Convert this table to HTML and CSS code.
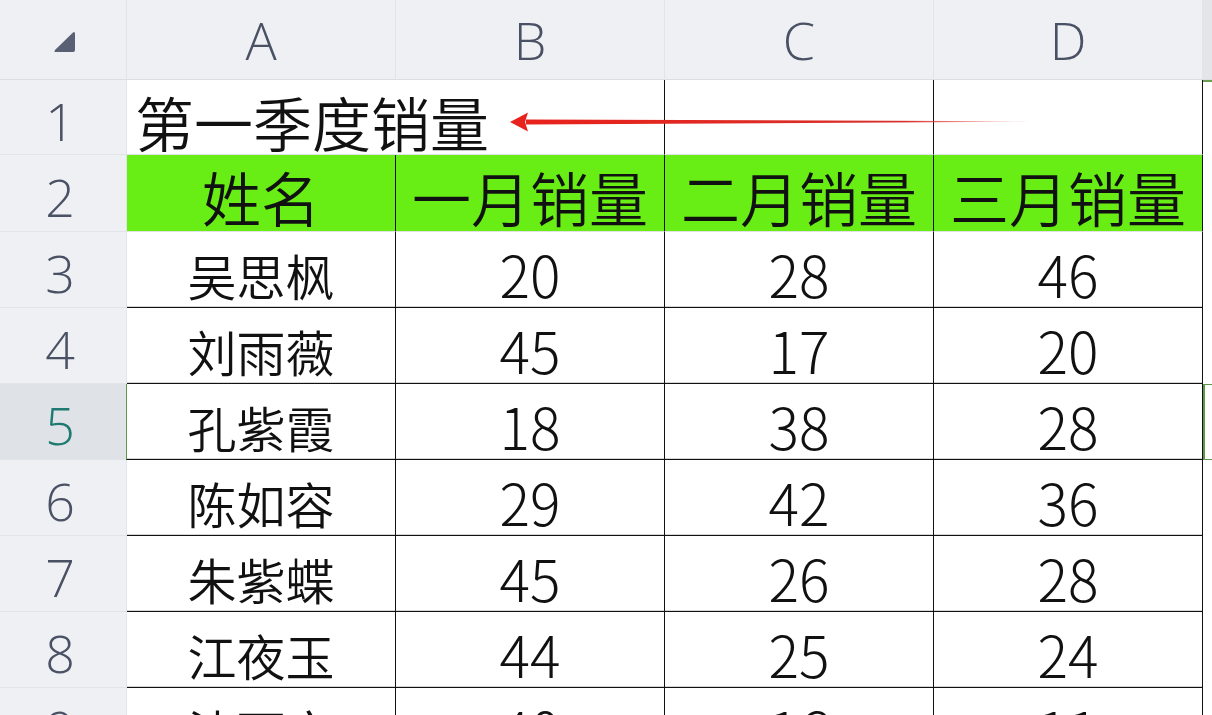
FILE: index.html
```html
<!DOCTYPE html>
<html lang="zh-CN">
<head>
<meta charset="utf-8">
<title>第一季度销量</title>
<link rel="stylesheet" href="styles.css">
</head>
<body>
<div class="sheet">
  <div class="corner">
    <svg width="24" height="24" viewBox="0 0 24 24"><path d="M21 2.5 Q23 1 23 4 L23 20 Q23 22 21 22 L4 22 Q1.5 22 3 20 Z" fill="#5a6073"/></svg>
  </div>
  <div class="colhead">A</div>
  <div class="colhead">B</div>
  <div class="colhead">C</div>
  <div class="colhead">D</div>
  <div class="colhead colhead-e"></div>

  <div class="rowhead r1">1</div>
  <div class="cell title">第一季度销量</div>
  <div class="cell title-b"></div>
  <div class="cell plain"></div>
  <div class="cell plain"></div>
  <div class="cell e e1"></div>

  <div class="rowhead r2">2</div>
  <div class="cell head">姓名</div>
  <div class="cell head">一月销量</div>
  <div class="cell head">二月销量</div>
  <div class="cell head">三月销量</div>
  <div class="cell e"></div>

  <div class="rowhead">3</div>
  <div class="cell name">吴思枫</div>
  <div class="cell num">20</div>
  <div class="cell num">28</div>
  <div class="cell num">46</div>
  <div class="cell e"></div>

  <div class="rowhead">4</div>
  <div class="cell name">刘雨薇</div>
  <div class="cell num">45</div>
  <div class="cell num">17</div>
  <div class="cell num">20</div>
  <div class="cell e"></div>

  <div class="rowhead sel">5</div>
  <div class="cell name sel-left">孔紫霞</div>
  <div class="cell num">18</div>
  <div class="cell num">38</div>
  <div class="cell num">28</div>
  <div class="cell e e-sel"></div>

  <div class="rowhead">6</div>
  <div class="cell name">陈如容</div>
  <div class="cell num">29</div>
  <div class="cell num">42</div>
  <div class="cell num">36</div>
  <div class="cell e"></div>

  <div class="rowhead">7</div>
  <div class="cell name">朱紫蝶</div>
  <div class="cell num">45</div>
  <div class="cell num">26</div>
  <div class="cell num">28</div>
  <div class="cell e"></div>

  <div class="rowhead">8</div>
  <div class="cell name">江夜玉</div>
  <div class="cell num">44</div>
  <div class="cell num">25</div>
  <div class="cell num">24</div>
  <div class="cell e"></div>

  <div class="rowhead">9</div>
  <div class="cell name">沈丽文</div>
  <div class="cell num">40</div>
  <div class="cell num">16</div>
  <div class="cell num">11</div>
  <div class="cell e"></div>

  <svg class="arrow" width="540" height="30" viewBox="0 0 540 30">
    <defs>
      <linearGradient id="fade" x1="0" y1="0" x2="1" y2="0">
        <stop offset="0" stop-color="#e8221c"/>
        <stop offset="0.75" stop-color="#d8302a"/>
        <stop offset="1" stop-color="#e03030" stop-opacity="0"/>
      </linearGradient>
    </defs>
    <path d="M20 12.6 L525 14.2 L525 14.8 L20 17.4 Z" fill="url(#fade)"/>
    <path d="M4 15 L22 5.5 L19 15 L22 24.5 Z" fill="#e8221c"/>
  </svg>
</div>
</body>
</html>
```

FILE: styles.css
```css
html, body {
  margin: 0;
  padding: 0;
  background: #ffffff;
  overflow: hidden;
  height: 715px;
}

.sheet {
  position: relative;
  display: grid;
  grid-template-columns: 127px 269px 269px 269px 269px 9px;
  grid-template-rows: 80px 75px 77px 76px 76px 76px 76px 76px 76px 76px;
  width: 1212px;
  font-family: "Noto Sans CJK SC", "Noto Sans", sans-serif;
}

.corner {
  background: #eef0f3;
  border-bottom: 1px solid #dadde2;
  border-right: 1px solid #e1e4e8;
  box-sizing: border-box;
  display: flex;
  align-items: flex-start;
  padding: 30px 0 0 52px;
}

.colhead {
  background: #eef0f3;
  box-sizing: border-box;
  border-right: 1px solid #e1e4e8;
  border-bottom: 1px solid #dadde2;
  color: #4a5164;
  font-family: "Open Sans", "Noto Sans", sans-serif;
  font-weight: 300;
  font-size: 52px;
  line-height: 80px;
  text-align: center;
  padding-bottom: 4px;
}

.colhead-e {
  background: #e3e5e9;
  border-right: none;
}

.rowhead {
  background: #eef0f3;
  box-sizing: border-box;
  border-right: 1px solid #e1e4e8;
  border-bottom: 1px solid #e1e4e8;
  color: #4a5164;
  font-family: "Open Sans", "Noto Sans", sans-serif;
  font-weight: 300;
  font-size: 52px;
  display: flex;
  align-items: center;
  justify-content: center;
  padding-top: 6px;
  padding-right: 6px;
}

.rowhead.sel {
  background: #dfe2e7;
  color: #1f7a72;
}

.cell {
  box-sizing: border-box;
  background: #ffffff;
  border-right: 1px solid #111;
  border-bottom: 1px solid #111;
  box-shadow: inset 0 -1px 0 #d4d6da;
  color: #111;
  display: flex;
  align-items: center;
  justify-content: center;
  white-space: nowrap;
  line-height: 1;
  font-weight: 350;
  padding-top: 8px;
}

.title {
  justify-content: flex-start;
  overflow: visible;
  border-right: none;
  border-bottom: 1px solid #e0e2e6;
  box-shadow: none;
  font-size: 59px;
  padding-left: 8px;
  position: relative;
  z-index: 1;
}

.title-b,
.plain {
  border-bottom: 1px solid #e0e2e6;
  box-shadow: none;
}

.head {
  background: #68ee14;
  border-bottom: 1px solid #e0e2e6;
  box-shadow: none;
  font-size: 59px;
  padding-top: 6px;
}

.name {
  font-size: 49px;
  padding-top: 10px;
}

.num {
  font-size: 57px;
  font-weight: 300;
  padding-top: 8px;
}

.e {
  border-right: none;
  border-bottom: none;
  box-shadow: none;
}

.e1 {
  border-top: 2px solid #6a9e52;
}

.e-sel {
  border-top: 1px solid #5e9848;
  border-bottom: 1px solid #5e9848;
  border-left: 2px solid #5e9848;
}

.sel-left {
  border-left: 1px solid #5e9848;
  margin-left: -1px;
}

.arrow {
  position: absolute;
  left: 506px;
  top: 107px;
  z-index: 2;
}
```
